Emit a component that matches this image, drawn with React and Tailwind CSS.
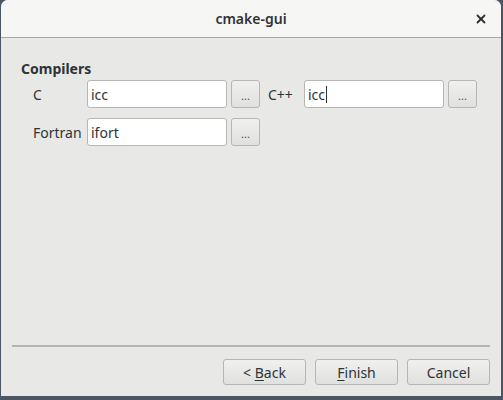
import { X } from "lucide-react";

function Field({ value, caret }) {
  return (
    <div className="h-[28px] w-[140px] rounded-[3px] border border-[#b6b6b3] bg-white px-[3px] flex items-center text-[14px] text-[#2e3436]">
      {value}
      {caret && <span className="ml-px inline-block h-[17px] w-px bg-[#2e3436]" />}
    </div>
  );
}

function DotsButton() {
  return (
    <button
      type="button"
      className="h-[28px] w-[29px] rounded-[3px] border border-[#b6b6b3] bg-gradient-to-b from-[#f0f0ef] to-[#e0e0de] text-[11px] text-[#555] flex items-center justify-center pt-[4px]"
    >
      ...
    </button>
  );
}

function WizardButton({ children }) {
  return (
    <button
      type="button"
      className="h-[26px] w-[83px] rounded-[3px] border border-[#b6b6b3] bg-gradient-to-b from-[#f0f0ef] to-[#e0e0de] text-[14px] text-[#2e3436]"
    >
      {children}
    </button>
  );
}

export default function App() {
  return (
    <div
      className="h-[400px] w-[503px] bg-[#4a5663] pl-px pr-[2px] pb-[4px] overflow-hidden"
      style={{ fontFamily: '"Noto Sans", "DejaVu Sans", sans-serif' }}
    >
      <div className="h-full flex flex-col rounded-t-[7px] overflow-hidden bg-[#e8e8e7]">
        <div className="h-[38px] shrink-0 bg-[#f6f6f5] border-b border-[#a8a8a6] relative flex items-center justify-center">
          <span className="text-[14px] font-semibold text-[#2e3436]">cmake-gui</span>
          <X className="absolute right-[13px] top-[12px] h-[14px] w-[14px] text-[#2e3436]" strokeWidth={3.2} />
        </div>

        <div className="flex-1 flex flex-col px-[11px] pt-[22px]">
          <div className="pl-[9px] text-[14px] font-bold text-[#2e3436] leading-[18px]">Compilers</div>
          <div className="mt-[2px] pl-[21px] flex flex-col gap-[10px]">
            <div className="flex items-center">
              <span className="w-[54px] text-[14px] text-[#2e3436]">C</span>
              <Field value="icc" />
              <span className="ml-[4px] flex"><DotsButton /></span>
              <span className="ml-[8px] w-[36px] text-[14px] text-[#2e3436]">C++</span>
              <Field value="icc" caret />
              <span className="ml-[4px] flex"><DotsButton /></span>
            </div>
            <div className="flex items-center">
              <span className="w-[54px] text-[14px] text-[#2e3436]">Fortran</span>
              <Field value="ifort" />
              <span className="ml-[4px] flex"><DotsButton /></span>
            </div>
          </div>

          <div className="mt-auto h-[2px] bg-[#b4b4b2]" />
          <div className="h-[49px] flex items-start justify-end gap-[9px] pt-[12px]">
            <WizardButton>
              &lt; <span className="underline underline-offset-2">B</span>ack
            </WizardButton>
            <WizardButton>
              <span className="underline underline-offset-2">F</span>inish
            </WizardButton>
            <WizardButton>Cancel</WizardButton>
          </div>
        </div>
      </div>
    </div>
  );
}
